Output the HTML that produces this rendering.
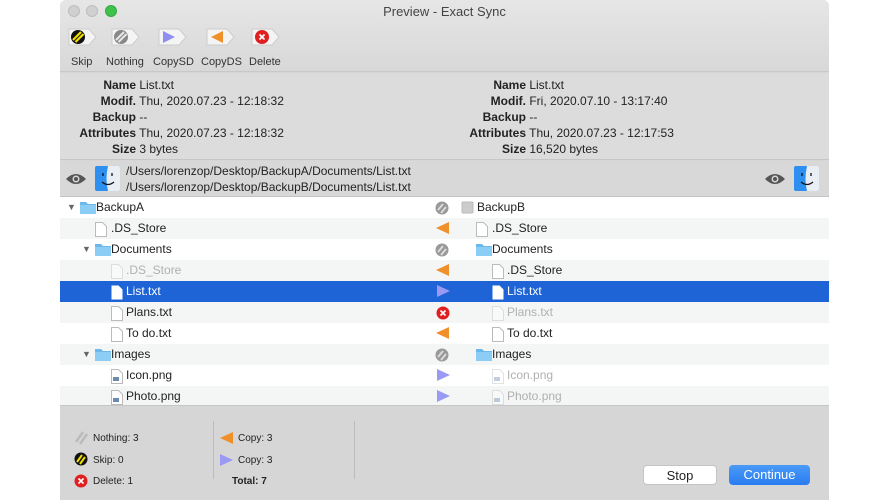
<!DOCTYPE html>
<html><head><style>
*{margin:0;padding:0;box-sizing:border-box}
body{width:890px;height:500px;background:#fff;font-family:"Liberation Sans",sans-serif;font-size:12px;color:#222;position:relative;overflow:hidden}
.win{position:absolute;left:60px;top:0;width:769px;height:500px;background:#d6d6d6;border-radius:6px 6px 0 0;overflow:hidden}
.top{position:absolute;left:0;top:0;width:769px;height:72px;background:linear-gradient(#e6e6e6,#d8d8d8);border-bottom:1px solid #c8c8c8}
.title{position:absolute;top:4px;width:100%;text-align:center;font-size:13px;color:#444}
.dot{position:absolute;top:5px;width:12px;height:12px;border-radius:50%;background:#d0d0d0;border:1px solid #bdbdbd}
.tb{position:absolute;top:26px;width:30px;height:22px}
.tl{position:absolute;top:56px;font-size:11px;color:#333;text-align:center}
.info{position:absolute;top:73px;left:0;width:769px;height:87px;background:#dcdcdc;border-bottom:1px solid #c6c6c6}
.r{position:absolute;font-size:12px;line-height:16px}
.r b{display:inline-block;text-align:right}
.path{position:absolute;top:161px;left:0;width:769px;height:36px;background:#d8d8d8;border-bottom:1px solid #c4c4c4}
.list{position:absolute;top:197px;left:0;width:769px;height:208px;background:#fff}
.row{position:absolute;left:0;width:769px;height:21px;font-size:12px;line-height:21px}
.row.alt{background:#f4f5f5}
.row.sel{background:#1f64d6;color:#fff}
.t{position:absolute;top:0}
.g{color:#b0b0b0}
.sel .g{color:#fff}
.ic{position:absolute;top:4px}
.bot{position:absolute;top:405px;left:0;width:769px;height:95px;background:#d6d6d6;border-top:1px solid #c6c6c6}
.s{position:absolute;font-size:10px;color:#222}
.btn{position:absolute;top:465px;height:20px;border-radius:4px;font-size:13px;text-align:center;line-height:20px}
</style></head><body>
<div class="win">
<div class="top">
<div class="dot" style="left:8px"></div><div class="dot" style="left:26px"></div><div class="dot" style="left:45px;background:#3fc24c;border-color:#35a942"></div>
<div class="title">Preview - Exact Sync</div>
<svg class="tb" style="left:7px" viewBox="0 0 30 22"><path d="M2 3h20l7 8-7 8H2z" fill="#f4f4f4" stroke="#ccc"/><circle cx="11" cy="11" r="7" fill="#111"/><path d="M6 14l8-8M8.5 16l8-8" stroke="#f0e000" stroke-width="2.2"/></svg>
<svg class="tb" style="left:50px" viewBox="0 0 30 22"><path d="M2 3h20l7 8-7 8H2z" fill="#f4f4f4" stroke="#ccc"/><circle cx="11" cy="11" r="7" fill="#888"/><path d="M6 14l8-8M8.5 16l8-8" stroke="#e8e8e8" stroke-width="2"/></svg>
<svg class="tb" style="left:97px" viewBox="0 0 30 22"><path d="M2 3h20l7 8-7 8H2z" fill="#f4f4f4" stroke="#ccc"/><path d="M6 5l12 6-12 6z" fill="#8f8ff0"/></svg>
<svg class="tb" style="left:145px" viewBox="0 0 30 22"><path d="M2 3h20l7 8-7 8H2z" fill="#f4f4f4" stroke="#ccc"/><path d="M18 5L6 11l12 6z" fill="#f0902a"/></svg>
<svg class="tb" style="left:190px" viewBox="0 0 30 22"><path d="M2 3h20l7 8-7 8H2z" fill="#f4f4f4" stroke="#ccc"/><circle cx="12" cy="11" r="7" fill="#e02020"/><path d="M9.5 8.5l5 5M14.5 8.5l-5 5" stroke="#fff" stroke-width="1.8"/></svg>
<div class="tl" style="left:11px">Skip</div><div class="tl" style="left:46px">Nothing</div><div class="tl" style="left:93px">CopySD</div><div class="tl" style="left:141px">CopyDS</div><div class="tl" style="left:189px">Delete</div>
</div>
<div class="info">
<div class="r" style="left:0;top:4px"><b style="width:76px">Name</b> List.txt</div>
<div class="r" style="left:0;top:20px"><b style="width:76px">Modif.</b> Thu, 2020.07.23 - 12:18:32</div>
<div class="r" style="left:0;top:36px"><b style="width:76px">Backup</b> --</div>
<div class="r" style="left:0;top:52px"><b style="width:76px">Attributes</b> Thu, 2020.07.23 - 12:18:32</div>
<div class="r" style="left:0;top:68px"><b style="width:76px">Size</b> 3 bytes</div>
<div class="r" style="left:390px;top:4px"><b style="width:76px">Name</b> List.txt</div>
<div class="r" style="left:390px;top:20px"><b style="width:76px">Modif.</b> Fri, 2020.07.10 - 13:17:40</div>
<div class="r" style="left:390px;top:36px"><b style="width:76px">Backup</b> --</div>
<div class="r" style="left:390px;top:52px"><b style="width:76px">Attributes</b> Thu, 2020.07.23 - 12:17:53</div>
<div class="r" style="left:390px;top:68px"><b style="width:76px">Size</b> 16,520 bytes</div>
</div>
<div class="path">
<svg style="position:absolute;left:5px;top:11px" width="22" height="14" viewBox="0 0 22 14"><path d="M1 7Q11-3 21 7Q11 17 1 7z" fill="#555"/><circle cx="11" cy="7" r="3.5" fill="#d8d8d8"/><circle cx="11" cy="7" r="2" fill="#555"/></svg>
<svg style="position:absolute;left:35px;top:5px" width="25" height="25" viewBox="0 0 25 25"><rect width="25" height="25" rx="2" fill="#2d8ff0"/><path d="M13 0h10a2 2 0 0 1 2 2v21a2 2 0 0 1-2 2H13q-3-12 0-25z" fill="#e8eef4"/><path d="M7 16q6 5 12 0" stroke="#111" fill="none" stroke-width="1.2"/><path d="M8 7v3M17 7v3" stroke="#111" stroke-width="1.3"/></svg>
<div class="r" style="left:66px;top:2px">/Users/lorenzop/Desktop/BackupA/Documents/List.txt</div>
<div class="r" style="left:66px;top:18px">/Users/lorenzop/Desktop/BackupB/Documents/List.txt</div>
<svg style="position:absolute;left:704px;top:11px" width="22" height="14" viewBox="0 0 22 14"><path d="M1 7Q11-3 21 7Q11 17 1 7z" fill="#555"/><circle cx="11" cy="7" r="3.5" fill="#d8d8d8"/><circle cx="11" cy="7" r="2" fill="#555"/></svg>
<svg style="position:absolute;left:734px;top:5px" width="25" height="25" viewBox="0 0 25 25"><rect width="25" height="25" rx="2" fill="#2d8ff0"/><path d="M13 0h10a2 2 0 0 1 2 2v21a2 2 0 0 1-2 2H13q-3-12 0-25z" fill="#e8eef4"/><path d="M7 16q6 5 12 0" stroke="#111" fill="none" stroke-width="1.2"/><path d="M8 7v3M17 7v3" stroke="#111" stroke-width="1.3"/></svg>
</div>
<div class="list">
<!-- rows -->
<div class="row" style="top:0"><span class="t" style="left:7px;font-size:9px;color:#666">▼</span><svg class="ic" style="left:20px" width="16" height="13"><path d="M0 1h6l2 2h8v10H0z" fill="#6cb8ea"/><rect y="4" width="16" height="9" fill="#8ccdf5"/></svg><span class="t" style="left:36px">BackupA</span>
<svg class="ic" style="left:375px" width="14" height="14"><circle cx="7" cy="7" r="6.5" fill="#999"/><path d="M3 9l5-6M6 12l5-6" stroke="#ddd" stroke-width="1.8"/></svg>
<svg class="ic" style="left:401px" width="13" height="13"><rect x="1" y="1" width="11" height="11" rx="1" fill="#ccc" stroke="#bbb"/></svg><span class="t" style="left:417px">BackupB</span></div>

<div class="row alt" style="top:21px"><svg class="ic" style="left:35px" width="12" height="15"><path d="M.5.5h7l4 4v10H.5z" fill="#fff" stroke="#bbb"/></svg><span class="t" style="left:51px">.DS_Store</span>
<svg class="ic" style="left:376px" width="14" height="12"><path d="M13 0L0 6l13 6z" fill="#f0902a"/></svg>
<svg class="ic" style="left:416px" width="12" height="15"><path d="M.5.5h7l4 4v10H.5z" fill="#fff" stroke="#bbb"/></svg><span class="t" style="left:432px">.DS_Store</span></div>

<div class="row" style="top:42px"><span class="t" style="left:22px;font-size:9px;color:#666">▼</span><svg class="ic" style="left:35px" width="16" height="13"><path d="M0 1h6l2 2h8v10H0z" fill="#6cb8ea"/><rect y="4" width="16" height="9" fill="#8ccdf5"/></svg><span class="t" style="left:51px">Documents</span>
<svg class="ic" style="left:375px" width="14" height="14"><circle cx="7" cy="7" r="6.5" fill="#999"/><path d="M3 9l5-6M6 12l5-6" stroke="#ddd" stroke-width="1.8"/></svg>
<svg class="ic" style="left:416px" width="16" height="13"><path d="M0 1h6l2 2h8v10H0z" fill="#6cb8ea"/><rect y="4" width="16" height="9" fill="#8ccdf5"/></svg><span class="t" style="left:432px">Documents</span></div>

<div class="row alt" style="top:63px"><svg class="ic" style="left:51px;opacity:.4" width="12" height="15"><path d="M.5.5h7l4 4v10H.5z" fill="#fff" stroke="#bbb"/></svg><span class="t g" style="left:66px">.DS_Store</span>
<svg class="ic" style="left:376px" width="14" height="12"><path d="M13 0L0 6l13 6z" fill="#f0902a"/></svg>
<svg class="ic" style="left:432px" width="12" height="15"><path d="M.5.5h7l4 4v10H.5z" fill="#fff" stroke="#bbb"/></svg><span class="t" style="left:447px">.DS_Store</span></div>

<div class="row sel" style="top:84px"><svg class="ic" style="left:51px" width="12" height="15"><path d="M.5.5h7l4 4v10H.5z" fill="#fff"/></svg><span class="t" style="left:66px">List.txt</span>
<svg class="ic" style="left:377px" width="14" height="12"><path d="M0 0l13 6L0 12z" fill="#9a9af5"/></svg>
<svg class="ic" style="left:432px" width="12" height="15"><path d="M.5.5h7l4 4v10H.5z" fill="#fff"/></svg><span class="t" style="left:447px">List.txt</span></div>

<div class="row alt" style="top:105px"><svg class="ic" style="left:51px" width="12" height="15"><path d="M.5.5h7l4 4v10H.5z" fill="#fff" stroke="#bbb"/></svg><span class="t" style="left:66px">Plans.txt</span>
<svg class="ic" style="left:376px" width="14" height="14"><circle cx="7" cy="7" r="6.5" fill="#e02020"/><path d="M4.5 4.5l5 5M9.5 4.5l-5 5" stroke="#fff" stroke-width="1.6"/></svg>
<svg class="ic" style="left:432px;opacity:.4" width="12" height="15"><path d="M.5.5h7l4 4v10H.5z" fill="#fff" stroke="#bbb"/></svg><span class="t g" style="left:447px">Plans.txt</span></div>

<div class="row" style="top:126px"><svg class="ic" style="left:51px" width="12" height="15"><path d="M.5.5h7l4 4v10H.5z" fill="#fff" stroke="#bbb"/></svg><span class="t" style="left:66px">To do.txt</span>
<svg class="ic" style="left:376px" width="14" height="12"><path d="M13 0L0 6l13 6z" fill="#f0902a"/></svg>
<svg class="ic" style="left:432px" width="12" height="15"><path d="M.5.5h7l4 4v10H.5z" fill="#fff" stroke="#bbb"/></svg><span class="t" style="left:447px">To do.txt</span></div>

<div class="row alt" style="top:147px"><span class="t" style="left:22px;font-size:9px;color:#666">▼</span><svg class="ic" style="left:35px" width="16" height="13"><path d="M0 1h6l2 2h8v10H0z" fill="#6cb8ea"/><rect y="4" width="16" height="9" fill="#8ccdf5"/></svg><span class="t" style="left:51px">Images</span>
<svg class="ic" style="left:375px" width="14" height="14"><circle cx="7" cy="7" r="6.5" fill="#999"/><path d="M3 9l5-6M6 12l5-6" stroke="#ddd" stroke-width="1.8"/></svg>
<svg class="ic" style="left:416px" width="16" height="13"><path d="M0 1h6l2 2h8v10H0z" fill="#6cb8ea"/><rect y="4" width="16" height="9" fill="#8ccdf5"/></svg><span class="t" style="left:432px">Images</span></div>

<div class="row" style="top:168px"><svg class="ic" style="left:51px" width="12" height="15"><path d="M.5.5h7l4 4v10H.5z" fill="#fff" stroke="#bbb"/><rect x="2" y="8" width="6" height="4" fill="#6a8ab0"/></svg><span class="t" style="left:66px">Icon.png</span>
<svg class="ic" style="left:377px" width="14" height="12"><path d="M0 0l13 6L0 12z" fill="#9a9af5"/></svg>
<svg class="ic" style="left:432px;opacity:.4" width="12" height="15"><path d="M.5.5h7l4 4v10H.5z" fill="#fff" stroke="#bbb"/><rect x="2" y="8" width="6" height="4" fill="#6a8ab0"/></svg><span class="t g" style="left:447px">Icon.png</span></div>

<div class="row alt" style="top:189px"><svg class="ic" style="left:51px" width="12" height="15"><path d="M.5.5h7l4 4v10H.5z" fill="#fff" stroke="#bbb"/><rect x="2" y="8" width="6" height="4" fill="#6a8ab0"/></svg><span class="t" style="left:66px">Photo.png</span>
<svg class="ic" style="left:377px" width="14" height="12"><path d="M0 0l13 6L0 12z" fill="#9a9af5"/></svg>
<svg class="ic" style="left:432px;opacity:.4" width="12" height="15"><path d="M.5.5h7l4 4v10H.5z" fill="#fff" stroke="#bbb"/><rect x="2" y="8" width="6" height="4" fill="#6a8ab0"/></svg><span class="t g" style="left:447px">Photo.png</span></div>
</div>
<div class="bot">
<svg style="position:absolute;left:14px;top:25px" width="14" height="14"><path d="M2 11l7-10M6 13l7-10" stroke="#bbb" stroke-width="2.5"/></svg>
<div class="s" style="left:33px;top:27px">Nothing: 3</div>
<svg style="position:absolute;left:14px;top:46px" width="14" height="14"><circle cx="7" cy="7" r="6.5" fill="#111"/><path d="M3 10l5-7M6 12l5-7" stroke="#f0e000" stroke-width="2"/></svg>
<div class="s" style="left:33px;top:49px">Skip: 0</div>
<svg style="position:absolute;left:14px;top:68px" width="14" height="14"><circle cx="7" cy="7" r="6.5" fill="#e02020"/><path d="M4.5 4.5l5 5M9.5 4.5l-5 5" stroke="#fff" stroke-width="1.6"/></svg>
<div class="s" style="left:33px;top:70px">Delete: 1</div>
<div style="position:absolute;left:153px;top:15px;width:1px;height:58px;background:#bcbcbc"></div>
<div style="position:absolute;left:294px;top:15px;width:1px;height:58px;background:#bcbcbc"></div>
<svg style="position:absolute;left:160px;top:26px" width="14" height="12"><path d="M13 0L0 6l13 6z" fill="#f0902a"/></svg>
<div class="s" style="left:178px;top:27px">Copy: 3</div>
<svg style="position:absolute;left:160px;top:48px" width="14" height="12"><path d="M0 0l13 6L0 12z" fill="#9a9af5"/></svg>
<div class="s" style="left:178px;top:49px">Copy: 3</div>
<div class="s" style="left:172px;top:70px;font-weight:bold">Total: 7</div>
</div>
<div class="btn" style="left:583px;width:74px;background:#fff;border:1px solid #c4c4c4;color:#222">Stop</div>
<div class="btn" style="left:669px;width:81px;background:linear-gradient(#4a9af8,#2a7cf0);color:#fff">Continue</div>
</div>
</body></html>
